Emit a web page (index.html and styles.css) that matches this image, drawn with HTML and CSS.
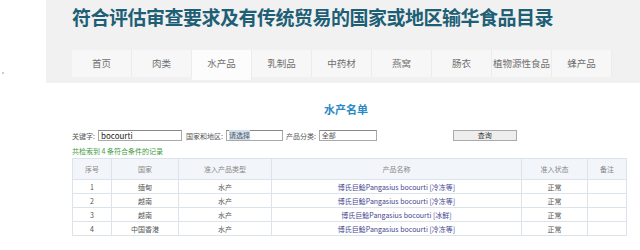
FILE: index.html
```html
<!DOCTYPE html>
<html lang="zh-CN">
<head>
  <meta charset="UTF-8">
  <title>符合评估审查要求及有传统贸易的国家或地区输华食品目录</title>
  <link rel="stylesheet" href="styles.css">
</head>
<body>
  <span class="dot"></span>
  <div class="top">
    <h1 class="siteTitle">符合评估审查要求及有传统贸易的国家或地区输华食品目录</h1>
    <ul class="nav">
      <li>首页</li>
      <li>肉类</li>
      <li class="active">水产品</li>
      <li>乳制品</li>
      <li>中药材</li>
      <li>燕窝</li>
      <li>肠衣</li>
      <li>植物源性食品</li>
      <li>蜂产品</li>
    </ul>
  </div>

  <div class="main">
    <h2 class="listTitle">水产名单</h2>

    <div class="search">
      <label>关键字:</label>
      <span class="field kw">bocourti</span>
      <label>国家和地区:</label>
      <span class="field area"><em>请选择</em></span>
      <label>产品分类:</label>
      <span class="field cat">全部</span>
      <button class="btn">查询</button>
    </div>

    <p class="count">共检索到 4 条符合条件的记录</p>

    <table class="list">
      <thead>
        <tr>
          <th class="c1">序号</th>
          <th class="c2">国家</th>
          <th class="c3">准入产品类型</th>
          <th class="c4">产品名称</th>
          <th class="c5">准入状态</th>
          <th class="c6">备注</th>
        </tr>
      </thead>
      <tbody>
        <tr><td>1</td><td>缅甸</td><td>水产</td><td><a>博氏巨鲶Pangasius bocourti [冷冻等]</a></td><td>正常</td><td></td></tr>
        <tr><td>2</td><td>越南</td><td>水产</td><td><a>博氏巨鲶Pangasius bocourti [冷冻等]</a></td><td>正常</td><td></td></tr>
        <tr><td>3</td><td>越南</td><td>水产</td><td><a>博氏巨鲶Pangasius bocourti [冰鲜]</a></td><td>正常</td><td></td></tr>
        <tr><td>4</td><td>中国香港</td><td>水产</td><td><a>博氏巨鲶Pangasius bocourti [冷冻等]</a></td><td>正常</td><td></td></tr>
      </tbody>
    </table>
  </div>
</body>
</html>
```

FILE: styles.css
```css
html,body{margin:0;padding:0;background:#fff;}
body{font-family:"Noto Sans CJK SC","Liberation Sans",sans-serif;color:#333;position:relative;}
.dot{position:absolute;left:2px;top:72px;width:2px;height:2px;border-radius:50%;background:#bbb;}

/* header */
.top{margin-left:46px;height:83px;background:#f1f1f1;padding:6px 0 0 26px;box-sizing:border-box;}
.siteTitle{margin:0;font-size:19px;line-height:22px;font-weight:700;color:#1e5f76;
           letter-spacing:-.5px;white-space:nowrap;}
.nav{list-style:none;margin:22px 0 0;padding:0;display:flex;}
.nav li{width:59px;height:27px;line-height:27px;text-align:center;font-size:9.5px;color:#707070;
        background:#f7f7f7;border-right:1px solid #ececec;white-space:nowrap;}
.nav li.active{background:#fcfcfc;height:30px;}

/* content */
.main{margin-left:72px;width:548px;}
.listTitle{margin:0;padding-top:19px;text-align:center;font-size:11px;line-height:14px;color:#2b8ac3;font-weight:700;}
.search{display:flex;align-items:center;height:11px;margin-top:14px;font-size:7px;color:#555;}
.search label{margin-right:3px;}
.field{height:9px;line-height:9px;border:1px solid #a9a9a9;border-top-color:#888;background:#fff;
       font-size:7px;padding-left:2px;box-sizing:content-box;}
.kw{width:80px;font-size:8px;color:#222;margin-right:4px;}
.area{width:53px;margin-right:3px;}
.area em{font-style:normal;background:#cfdff0;}
.cat{width:54px;}
.btn{margin-left:76px;width:64px;height:11px;padding:0;border:1px solid #aaa;background:#eee;
     font:7px/9px "Noto Sans CJK SC",sans-serif;color:#333;}
.count{margin:6px 0 0;font-size:7px;line-height:8px;color:#3f9b3f;}

.list{margin-top:3px;width:548px;border-collapse:collapse;font-size:7px;table-layout:fixed;}
.list th,.list td{border:1px solid #dde3ea;text-align:center;padding:0;font-weight:400;}
.list th{height:20px;background:#f2f6fa;color:#888;}
.list td{height:13px;color:#555;}
.list a{color:#45458f;}
.c1{width:38px;}
.c2{width:66px;}
.c3{width:92px;}
.c4{width:249px;}
.c5{width:65px;}
.c6{width:38px;}
```
